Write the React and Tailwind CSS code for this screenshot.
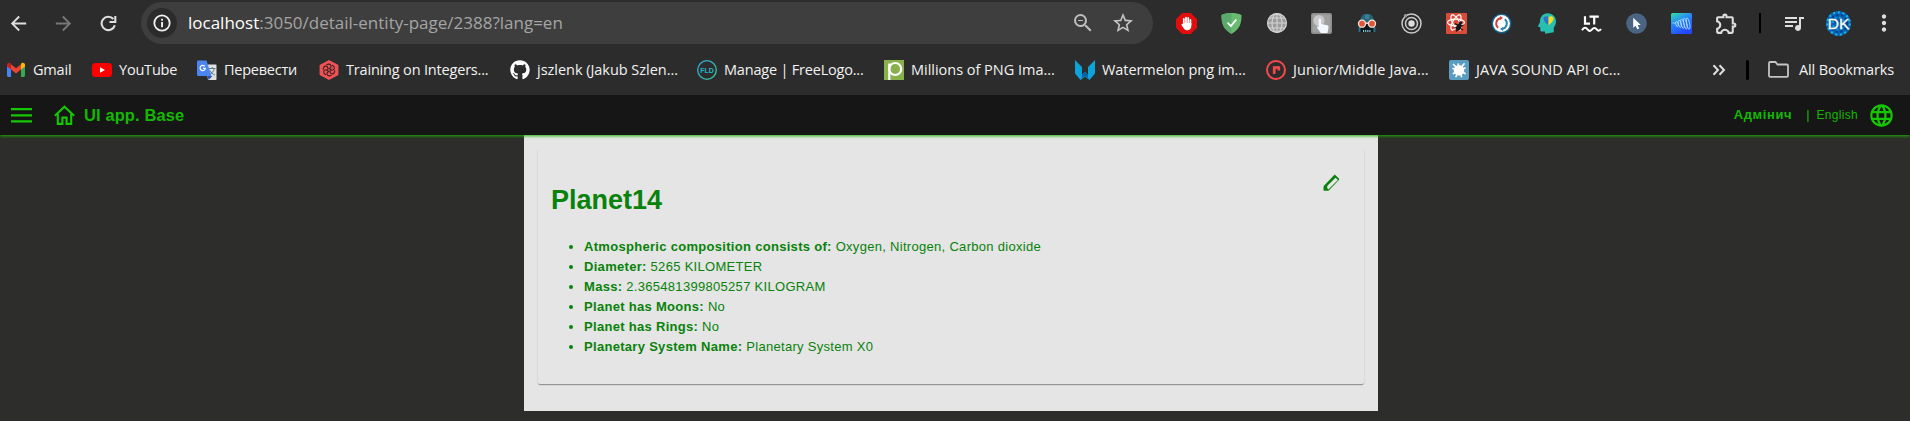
import {
  MdArrowBack,
  MdArrowForward,
  MdLanguage,
  MdMoreVert,
  MdOutlineExtension,
  MdOutlineZoomOut,
  MdQueueMusic,
  MdStarOutline,
} from "react-icons/md";
import { FaGithub } from "react-icons/fa";

/* ---------- toolbar icons ---------- */

function ReloadIcon() {
  return (
    <svg width="17" height="17" viewBox="0 0 17 17" fill="none" stroke="#dedede" strokeWidth="2.1">
      <path d="M14.8 10.2A6.7 6.7 0 1 1 13.4 4" />
      <path d="M15.3 1v6H9.5" />
    </svg>
  );
}

function InfoIcon() {
  return (
    <svg width="18" height="18" viewBox="0 0 18 18">
      <circle cx="9" cy="9" r="7.7" fill="none" stroke="#f1f1f1" strokeWidth="1.8" />
      <rect x="8.1" y="4.8" width="1.9" height="1.9" fill="#f1f1f1" />
      <rect x="8.1" y="8" width="1.9" height="5.2" fill="#f1f1f1" />
    </svg>
  );
}

function AdBlockIcon() {
  return (
    <svg width="21" height="21" viewBox="0 0 21 21">
      <path d="M6.2 0h8.6L21 6.2v8.6L14.8 21H6.2L0 14.8V6.2z" fill="#e40d0d" />
      <g stroke="#fff" strokeWidth="1.8" strokeLinecap="round">
        <path d="M7.800 11V6M10 10V4.600M12.200 10V5M14.400 12V7" />
      </g>
      <path d="M6.900 10h8.400v3c0 2.600-1.400 4.300-3.800 4.300-2 0-3-.8-4-2.400L5.300 11.800c.3-.9 1-1 1.600-.4z" fill="#fff" />
    </svg>
  );
}

function ShieldIcon() {
  return (
    <svg width="21" height="21" viewBox="0 0 21 21">
      <path d="M10.500 0c3.500 0 7 .6 10 2 0 8-1.500 14-10 19C2 16 .5 10 .5 2c3-1.400 6.500-2 10-2z" fill="#68bc71" />
      <path d="M10.500 0v21C2 16 .5 10 .5 2c3-1.400 6.500-2 10-2z" fill="#5aab6b" />
      <path d="M6.500 9.500l3.400 3.600L15.300 6.500" fill="none" stroke="#fff" strokeWidth="1.800" />
    </svg>
  );
}

function WireGlobeIcon() {
  return (
    <svg width="20" height="20" viewBox="0 0 20 20">
      <circle cx="10" cy="10" r="10" fill="#9c9c9c" />
      <g fill="none" stroke="#d4d4d4" strokeWidth="1.100">
        <circle cx="10" cy="10" r="9.400" />
        <ellipse cx="10" cy="10" rx="5" ry="9.400" />
        <path d="M10 0v20M0 10h20M2 5h16M2 15h16" />
      </g>
    </svg>
  );
}

function PointerTileIcon() {
  return (
    <svg width="21" height="21" viewBox="0 0 21 21">
      <rect width="21" height="21" rx="2" fill="#8c8c8c" />
      <rect x="1.500" y="1.500" width="18" height="18" rx="1" fill="#a0a0a0" />
      <circle cx="8" cy="7.500" r="5.500" fill="#c9c9c9" />
      <path d="M7.600 6.500c0-1.500 2.400-1.500 2.400 0V11l6.300 1.200c1 .3 1.400 1 1.200 2L16.500 20H9.800l-3.600-5c-.7-1.300.6-2 1.500-1.200z" fill="#f3f7ff" />
    </svg>
  );
}

function RobotIcon() {
  return (
    <svg width="20" height="20" viewBox="0 0 20 20">
      <path d="M3 10C3 4 5.500.8 10 .8S17 4 17 10z" fill="#2b6678" />
      <path d="M8 1.600h4V6H8z" fill="#388096" />
      <path d="M1.500 12h17v7h-17z" fill="#0e171c" />
      <path d="M1.500 14h2v5h-2zM16.500 14h2v5h-2z" fill="#2f7186" />
      <path d="M6 18h8" stroke="#7fc3d4" strokeWidth="2" strokeDasharray="1.200 .9" />
      <circle cx="5" cy="10.700" r="3.500" fill="#e2553a" stroke="#f6e6dc" strokeWidth="1.300" />
      <circle cx="15" cy="10.700" r="3.500" fill="#e2553a" stroke="#f6e6dc" strokeWidth="1.300" />
      <path d="M8.500 10.200h3" stroke="#f6e6dc" strokeWidth="1.400" />
    </svg>
  );
}

function TargetIcon() {
  return (
    <svg width="21" height="21" viewBox="0 0 21 21">
      <g fill="none" stroke="#c9c9c9" strokeWidth="1.500">
        <circle cx="10.500" cy="10.500" r="9.500" />
        <circle cx="10.500" cy="10.500" r="6" />
      </g>
      <circle cx="10.500" cy="10.500" r="3.200" fill="#dcdcdc" />
      <circle cx="4.500" cy="2.800" r="1.700" fill="#9a9a9a" />
    </svg>
  );
}

function ReactBugIcon() {
  return (
    <svg width="21" height="21" viewBox="0 0 21 21">
      <rect width="21" height="21" rx="1" fill="#dc4a38" />
      <g fill="none" stroke="#fff" strokeWidth="1.200">
        <ellipse cx="10" cy="9.500" rx="8.500" ry="3.300" />
        <ellipse cx="10" cy="9.500" rx="8.500" ry="3.300" transform="rotate(60 10 9.500)" />
        <ellipse cx="10" cy="9.500" rx="8.500" ry="3.300" transform="rotate(-60 10 9.500)" />
      </g>
      <ellipse cx="12.800" cy="14" rx="2.500" ry="3.800" transform="rotate(25 12.800 14)" fill="#1b1311" />
      <circle cx="14.500" cy="9.800" r="1.600" fill="#1b1311" />
      <path d="M9 10.500l3 2M8.500 15l4-1M10 18.500l2.500-3M17.500 12l-3.500 1.500M17 17l-3.500-2" stroke="#1b1311" strokeWidth="1.200" />
    </svg>
  );
}

function SyncDiscIcon() {
  return (
    <svg width="21" height="21" viewBox="0 0 21 21">
      <circle cx="10.500" cy="10.500" r="10" fill="#12618c" />
      <circle cx="10.500" cy="10.500" r="8.500" fill="#fff" />
      <path d="M9.500 5.200a5.400 5.400 0 0 0-2.300 9.500" fill="none" stroke="#d33d3d" strokeWidth="1.900" />
      <path d="M11.500 15.800a5.400 5.400 0 0 0 2.300-9.500" fill="none" stroke="#2484b8" strokeWidth="1.900" />
      <path d="M9 3l3 2-3 2z" fill="#d33d3d" />
      <path d="M12 18l-3-2 3-2z" fill="#2484b8" />
    </svg>
  );
}

function HeadHeartIcon() {
  return (
    <svg width="20" height="21" viewBox="0 0 20 21">
      <path d="M10.500.2C15.500.2 19 3.800 19 8.500c0 2.800-1.200 4.700-2.200 6v4.700L8.300 20.800l-.4-2.300H4.700c-1 0-1.400-.6-1.400-1.500v-2.800L.8 13.600 3 9.300C2.700 4 6 .2 10.500.2z" fill="#27c0b0" />
      <path d="M11.500 12.500C8.500 10 6.500 8 6.500 5.600c0-2.600 3.500-3.400 5-1z" fill="#2f6fd0" />
      <path d="M11.500 12.500c3-2.500 5-4.500 5-6.900 0-2.600-3.500-3.400-5-1z" fill="#f5dd1e" />
    </svg>
  );
}

function LanguageToolIcon() {
  return (
    <svg width="21" height="20" viewBox="0 0 21 20" fill="none" stroke="#fff" strokeWidth="2.200">
      <path d="M4 3.200v7.500h5M8.500 3.600h9.300M13.200 3.600v8" />
      <path d="M1 17.200c2-3 3.800-3 5.500-.8s3.200 1.800 4.600 0 3.200-2 4.600 0 3 1.400 4.300-.4" strokeWidth="2" />
    </svg>
  );
}

function CursorDiscIcon() {
  return (
    <svg width="21" height="21" viewBox="0 0 21 21">
      <circle cx="10.500" cy="10.500" r="10.300" fill="#4a6484" />
      <path d="M7.200 4.800v10l2.400-2.100 1.700 3.600 2-.9-1.700-3.500h3.200z" fill="#fff" />
    </svg>
  );
}

function WaveTileIcon() {
  return (
    <svg width="21" height="21" viewBox="0 0 21 21">
      <defs>
        <linearGradient id="wave" x1="0" y1="0" x2="0.500" y2="1">
          <stop offset="0" stopColor="#30e0a8" />
          <stop offset="0.450" stopColor="#2a8cf4" />
          <stop offset="1" stopColor="#2448ff" />
        </linearGradient>
      </defs>
      <rect width="21" height="21" rx="1.500" fill="url(#wave)" />
      <g fill="none" stroke="#a9dcff" strokeWidth="0.900">
        <path d="M1.500 10h2.500l1-.5" />
        <ellipse cx="6" cy="11" rx="1.200" ry="2.600" transform="rotate(-12 6 11)" />
        <ellipse cx="8.700" cy="10.800" rx="1.400" ry="3.600" transform="rotate(-12 8.700 10.800)" />
        <ellipse cx="11.500" cy="10.700" rx="1.500" ry="4.600" transform="rotate(-12 11.500 10.700)" />
        <ellipse cx="14.300" cy="10.600" rx="1.500" ry="5.400" transform="rotate(-12 14.300 10.600)" />
        <ellipse cx="17.100" cy="10.600" rx="1.500" ry="5.800" transform="rotate(-12 17.100 10.600)" />
      </g>
    </svg>
  );
}

function Avatar() {
  return (
    <svg width="25" height="25" viewBox="0 0 25 25">
      <circle cx="12.500" cy="12.500" r="12.500" fill="#0a62b4" />
      <g fill="none" strokeWidth="2.200" strokeDasharray="2 2.700">
        <circle cx="12.500" cy="12.500" r="11.200" stroke="#19b2e6" />
        <circle cx="12.500" cy="12.500" r="8.500" stroke="#063c8c" />
        <circle cx="12.500" cy="12.500" r="6" stroke="#1296d8" />
        <circle cx="12.500" cy="12.500" r="3" stroke="#063c8c" />
      </g>
      <text x="12.500" y="18" textAnchor="middle" fontFamily="Liberation Sans, sans-serif" fontSize="15.500" fill="#fffbe6" stroke="#fffbe6" strokeWidth="0.300">
        DK
      </text>
    </svg>
  );
}

const extensions = [
  AdBlockIcon,
  ShieldIcon,
  WireGlobeIcon,
  PointerTileIcon,
  RobotIcon,
  TargetIcon,
  ReactBugIcon,
  SyncDiscIcon,
  HeadHeartIcon,
  LanguageToolIcon,
  CursorDiscIcon,
  WaveTileIcon,
];

/* ---------- bookmark icons ---------- */

function GmailIcon() {
  return (
    <svg width="20" height="20" viewBox="0 0 20 20">
      <path d="M1 5v10.600c0 .8.600 1.400 1.400 1.400H5V8z" fill="#4285f4" />
      <path d="M19 5v10.600c0 .8-.6 1.400-1.400 1.400H15V8z" fill="#34a853" />
      <path d="M15 4.400V9.500l4-3V5c0-2-2.200-2.800-3.600-1.700z" fill="#fbbc04" />
      <path d="M5 4.400V9.500l-4-3V5c0-2 2.200-2.800 3.600-1.700z" fill="#c5221f" />
      <path d="M5 4.300l5 3.900 5-3.900v5.300l-5 3.800-5-3.800z" fill="#ea4335" />
    </svg>
  );
}

function YouTubeIcon() {
  return (
    <svg width="20" height="20" viewBox="0 0 20 20">
      <rect x="0" y="3" width="20" height="14" rx="3.500" fill="#f00" />
      <path d="M8 7.200l5 2.800-5 2.800z" fill="#fff" />
    </svg>
  );
}

function TranslateIcon() {
  return (
    <svg width="20" height="20" viewBox="0 0 20 20">
      <path d="M9 4.500h9.500c.8 0 1 .5 1 1V19c0 .6-.4 1-1 1H11z" fill="#e0e0e0" />
      <path d="M10.500 16h5L11.600 20z" fill="#3450b8" />
      <path d="M12 8.500h6.500M15.200 7v1.500M17.300 8.600c-.6 2.800-2.500 5-5 6.200M13 10.500c1 2 2.600 3.600 5 4.500" fill="none" stroke="#5f7f8c" strokeWidth="1" />
      <path d="M1.200.5H9.500L14.500 16H1.200c-.7 0-1.200-.5-1.200-1.200V1.700C0 1 .5.500 1.200.500z" fill="#4a86ee" />
      <path d="M7.700 6.300A2.600 2.600 0 1 0 8.300 8.400H6" fill="none" stroke="#fff" strokeWidth="1.200" />
    </svg>
  );
}

function CodewarsIcon() {
  return (
    <svg width="20" height="20" viewBox="0 0 20 20">
      <path d="M10 1l8.500 4.600v8.800L10 19l-8.500-4.600V5.600z" fill="#ef5356" stroke="#ef5356" strokeWidth="1.800" strokeLinejoin="round" />
      <g fill="none" stroke="#3b2022" strokeWidth="1.150" strokeLinecap="round">
        {[0, 60, 120, 180, 240, 300].map((angle) => (
          <path key={angle} d="M10 8.600c1.800-.6 2.600-2 1.700-3.500-.8-1.200-2.600-1.300-3.900-.4" transform={`rotate(${angle} 10 10)`} />
        ))}
      </g>
    </svg>
  );
}

function GithubIcon() {
  return <FaGithub className="size-5 text-white" />;
}

function FreeLogoIcon() {
  return (
    <svg width="20" height="20" viewBox="0 0 20 20">
      <defs>
        <linearGradient id="fld" x1="0" y1="0" x2="1" y2="1">
          <stop offset="0" stopColor="#2fa4e0" />
          <stop offset="1" stopColor="#35c99a" />
        </linearGradient>
      </defs>
      <circle cx="10" cy="10" r="9.300" fill="none" stroke="url(#fld)" strokeWidth="1.300" />
      <text x="10" y="12.600" textAnchor="middle" fontFamily="Liberation Sans, sans-serif" fontWeight="700" fontSize="7" fill="#27b5c4">
        FLD
      </text>
    </svg>
  );
}

function PngTreeIcon() {
  return (
    <svg width="20" height="20" viewBox="0 0 20 20">
      <rect width="20" height="20" fill="#88b04b" />
      <path d="M5.300 20V3.500" stroke="#fff" strokeWidth="2.200" />
      <circle cx="11.200" cy="9" r="6" fill="none" stroke="#fff" strokeWidth="2.200" />
    </svg>
  );
}

function WingsIcon() {
  return (
    <svg width="20" height="20" viewBox="0 0 20 20">
      <path d="M0 0l7 7v7.500L10 12l3 2.500V7l7-7v13.500L14.500 20 10 16.500 5.500 20 0 13.500z" fill="#0ba3d9" />
      <path d="M7 14.500L10 12l3 2.500V18l-3-2-3 2z" fill="#0c62a8" />
    </svg>
  );
}

function RedRIcon() {
  return (
    <svg width="20" height="20" viewBox="0 0 20 20" fill="none" stroke="#f4494d">
      <circle cx="10" cy="10" r="9" strokeWidth="2" />
      <path d="M8.200 14V6.300M8.200 9.500c.4-1.700 2.400-2.400 4.600-1.900v3" strokeWidth="2.700" />
    </svg>
  );
}

function SplatIcon() {
  return (
    <svg width="20" height="20" viewBox="0 0 20 20">
      <rect width="20" height="20" rx="2" fill="#5b9dc0" />
      <circle cx="10" cy="10.300" r="5.200" fill="#fff" />
      <path d="M10 10L4.500 4.500M10 10l-.8-6M10 10l5-6M10 10l6-2M10 10l6 3.500M10 10l2.500 6.500M10 10l-3 6.500M10 10l-5.500 3.500M10 10L4 8.500" stroke="#fff" strokeWidth="1.700" strokeLinecap="round" />
    </svg>
  );
}

const bookmarks = [
  { icon: GmailIcon, label: "Gmail", box: "w-[86px]", track: "tracking-[-0.2px]" },
  { icon: YouTubeIcon, label: "YouTube", box: "w-[105px]", track: "tracking-[-0.2px]" },
  { icon: TranslateIcon, label: "Перевести", box: "w-[122px]", track: "tracking-[-0.25px]" },
  { icon: CodewarsIcon, label: "Training on Integers...", box: "w-[191px]", track: "tracking-[-0.18px]" },
  { icon: GithubIcon, label: "jszlenk (Jakub Szlen...", box: "w-[187px]", track: "tracking-[-0.03px]" },
  { icon: FreeLogoIcon, label: "Manage | FreeLogo...", box: "w-[187px]", track: "tracking-[-0.2px]" },
  { icon: PngTreeIcon, label: "Millions of PNG Ima...", box: "w-[191px]", track: "tracking-[-0.02px]" },
  { icon: WingsIcon, label: "Watermelon png im...", box: "w-[191px]", track: "tracking-[-0.07px]" },
  { icon: RedRIcon, label: "Junior/Middle Java...", box: "w-[183px]", track: "tracking-[0.08px]" },
  { icon: SplatIcon, label: "JAVA SOUND API oc...", box: "w-[200px]", track: "tracking-[0.1px]" },
];

function Toolbar() {
  return (
    <div className="flex h-[46px] items-center">
      <div className="flex w-[141px] shrink-0 items-center">
        <span className="grid w-9 place-items-center">
          <MdArrowBack className="size-[23px] text-[#dedede]" />
        </span>
        <span className="ml-[9px] grid w-9 place-items-center">
          <MdArrowForward className="size-[23px] text-[#777777]" />
        </span>
        <span className="ml-[9px] grid w-9 place-items-center">
          <ReloadIcon />
        </span>
      </div>
      <div className="flex h-[42px] w-[1012px] shrink-0 items-center rounded-full bg-[#3e3e3e] pl-1.5">
        <span className="grid size-[30px] place-items-center rounded-full bg-[#2b2b2b]">
          <InfoIcon />
        </span>
        <span className="ml-[11px] text-[17px] whitespace-pre text-[#a5a5a5]">
          <span className="text-white">localhost</span>:3050/detail-entity-page/2388?lang=en
        </span>
        <MdOutlineZoomOut className="ml-auto size-[24px] text-[#bdbdbd]" />
        <MdStarOutline className="mr-[18px] ml-4 size-[24px] text-[#c4c4c4]" />
      </div>
      <div className="ml-[11px] flex items-center">
        {extensions.map((Icon, i) => (
          <span key={i} className="grid w-[45px] place-items-center">
            <Icon />
          </span>
        ))}
        <span className="grid w-[45px] place-items-center">
          <MdOutlineExtension className="size-[25px] text-[#dedede]" />
        </span>
        <span className="mx-2.5 h-5 w-0.5 bg-black" />
        <span className="grid w-[45px] place-items-center">
          <MdQueueMusic className="size-[24px] text-[#dedede]" />
        </span>
        <span className="grid w-[45px] place-items-center">
          <Avatar />
        </span>
        <span className="grid w-[45px] place-items-center">
          <MdMoreVert className="size-[26px] text-[#dedede]" />
        </span>
      </div>
    </div>
  );
}

function BookmarksBar() {
  return (
    <div className="flex h-[49px] items-center pb-0.5 pl-1.5 text-[14.5px] whitespace-nowrap text-[#f2f2f2]">
      {bookmarks.map(({ icon: Icon, label, box, track }) => (
        <span key={label} className={`flex shrink-0 items-center gap-[7px] ${box}`}>
          <span className="shrink-0">
            <Icon />
          </span>
          <span className={track}>{label}</span>
        </span>
      ))}
      <svg className="ml-[63px] shrink-0" width="14" height="12" viewBox="0 0 14 12" fill="none" stroke="#dedede" strokeWidth="2">
        <path d="M1.500 1.200L6 6l-4.500 4.800M7.500 1.200L12 6l-4.500 4.800" />
      </svg>
      <span className="ml-5 h-5 w-[3px] rounded-sm bg-black" />
      <svg className="ml-[19px] shrink-0" width="21" height="17" viewBox="0 0 21 17" fill="none" stroke="#c4c4c4" strokeWidth="1.800">
        <path d="M1 2.200C1 1.400 1.400 1 2.200 1H7.500l2 2.500h9.300c.8 0 1.200.4 1.200 1.200v10c0 .8-.4 1.200-1.200 1.200H2.200C1.400 15.900 1 15.500 1 14.700z" />
      </svg>
      <span className="ml-2.5 tracking-[-0.12px]">All Bookmarks</span>
    </div>
  );
}

function AppHeader() {
  return (
    <header className="relative flex h-10 items-center bg-[#161616] font-['Liberation_Sans',sans-serif] text-[#14b800] shadow-[0_1px_3px_#18b400] [clip-path:inset(0_0_-8px_0)]">
      <svg className="ml-[11px]" width="21" height="16" viewBox="0 0 21 16" fill="#14c800">
        <path d="M0 1h21v2.300H0zM0 7.200h21v2.300H0zM0 13.300h21v2.300H0z" />
      </svg>
      <svg className="ml-[22px]" width="21" height="20" viewBox="0 0 21 20" fill="none" stroke="#14c800" strokeWidth="2.100">
        <path d="M.8 10.800L10.500 1.800l9.700 9" />
        <path d="M3.800 8.500v10.400h4.600v-6.300h4.200v6.300h4.600V8.500" />
      </svg>
      <span className="ml-[9px] pt-px text-[16.500px] font-bold tracking-[0.1px]">UI app. Base</span>
      <span className="ml-auto text-[13px] font-bold tracking-[0.6px]">Адмінич</span>
      <span className="ml-3.5 text-[13px]">|</span>
      <span className="ml-[7px] text-xs tracking-[0.3px]">English</span>
      <MdLanguage className="mr-[15px] ml-2.5 size-[27px] text-[#14c800]" />
    </header>
  );
}

const facts = [
  ["Atmospheric composition consists of:", "Oxygen, Nitrogen, Carbon dioxide"],
  ["Diameter:", "5265 KILOMETER"],
  ["Mass:", "2.365481399805257 KILOGRAM"],
  ["Planet has Moons:", "No"],
  ["Planet has Rings:", "No"],
  ["Planetary System Name:", "Planetary System X0"],
];

function PlanetPage() {
  return (
    <main className="ml-[524px] h-[276px] w-[854px] bg-[#e5e5e5] p-[13px] pl-3.5 font-['Liberation_Sans',sans-serif] tracking-[0.3px] text-[#08820a]">
      <article className="flex h-[236px] w-[826px] justify-between rounded-xs px-[13px] shadow-[0_2px_1px_-1px_rgba(0,0,0,0.2),0_1px_1px_rgba(0,0,0,0.14),0_1px_2px_rgba(0,0,0,0.12)]">
        <div>
          <h1 className="mt-[35px] text-[27px] leading-[34px] font-bold tracking-normal">Planet14</h1>
          <ul className="mt-5 list-disc pl-[33px] text-[13px] leading-5">
            {facts.map(([name, value]) => (
              <li key={name}>
                <b>{name}</b> {value}
              </li>
            ))}
          </ul>
        </div>
        <svg className="mt-[26px] mr-[11px]" width="17" height="17" viewBox="0 0 17 17">
          <path
            fillRule="evenodd"
            d="M11.700.4L15.900 4.500c.5.500.5 1 0 1.600L6 16.200c-.5.400-1 .5-1.600.5H1.500c-.7 0-1-.4-1-1v-2.500c0-.8.2-1.300.7-1.800zM12.500 3.800L4.600 11.500c-.9 1-.5 3.700 1 3.800L15 5.900z"
            fill="#08820a"
          />
        </svg>
      </article>
    </main>
  );
}

export default function App() {
  return (
    <div className="h-[421px] w-[1910px] overflow-hidden bg-[#2d2d2b]">
      <div className="bg-[#2c2c2c] font-['Open_Sans','Noto_Sans',sans-serif]">
        <Toolbar />
        <BookmarksBar />
      </div>
      <AppHeader />
      <PlanetPage />
    </div>
  );
}
